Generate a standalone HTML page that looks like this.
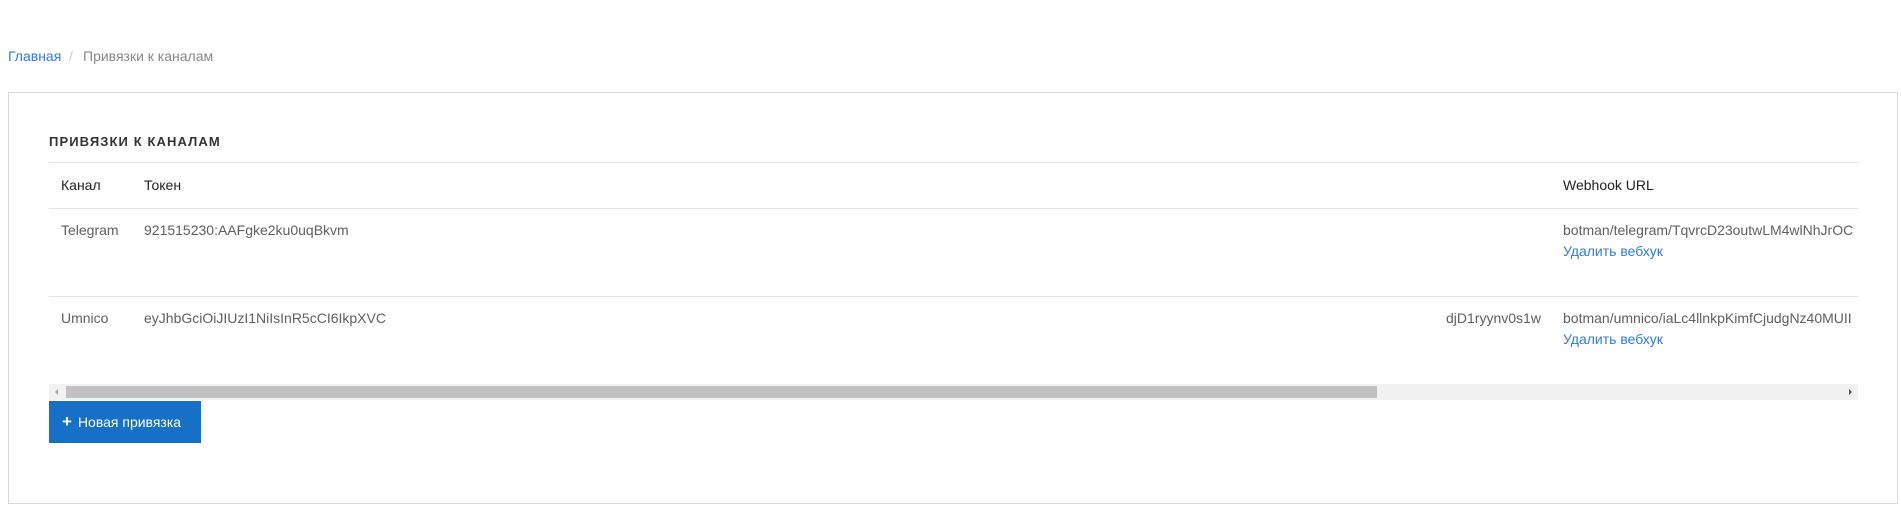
<!DOCTYPE html>
<html><head><meta charset="utf-8"><style>
*{box-sizing:border-box;margin:0;padding:0}
body{width:1901px;height:505px;background:#fff;font-family:"Liberation Sans",Arial,sans-serif;font-size:14px;color:#5f5f5f;position:relative;overflow:hidden}
.a{position:absolute;white-space:nowrap;line-height:18px}
.card{position:absolute;left:8px;top:92px;width:1890px;height:412px;border:1px solid #d5d8de}
.ln{position:absolute;left:49px;width:1809px;height:1px;background:#dfe2e6}
.h{color:#222}
.blue{color:#2f7be0}
</style></head><body>
<div class="a blue" style="left:8px;top:47px">Главная</div>
<div class="a" style="left:69px;top:47px;color:#ccc">/</div>
<div class="a" style="left:83px;top:47px;color:#888">Привязки к каналам</div>
<div class="card"></div>
<div class="a" style="left:49px;top:133px;font-weight:bold;color:#333;letter-spacing:1.1px;font-size:13px">ПРИВЯЗКИ К КАНАЛАМ</div>
<div class="ln" style="top:162px"></div>
<div class="a h" style="left:61px;top:176px">Канал</div>
<div class="a h" style="left:144px;top:176px">Токен</div>
<div class="a h" style="left:1563px;top:176px">Webhook URL</div>
<div class="ln" style="top:208px"></div>
<div class="a" style="left:61px;top:221px">Telegram</div>
<div class="a" style="left:144px;top:221px">921515230:AAFgke2ku0uqBkvm</div>
<div class="a" style="left:1563px;top:221px;width:295px;overflow:hidden">botman/telegram/TqvrcD23outwLM4wlNhJrOC</div>
<div class="a blue" style="left:1563px;top:242px">Удалить вебхук</div>
<div class="ln" style="top:296px"></div>
<div class="a" style="left:61px;top:309px">Umnico</div>
<div class="a" style="left:144px;top:309px">eyJhbGciOiJIUzI1NiIsInR5cCI6IkpXVC</div>
<div class="a" style="left:1446px;top:309px">djD1ryynv0s1w</div>
<div class="a" style="left:1563px;top:309px;width:295px;overflow:hidden">botman/umnico/iaLc4llnkpKimfCjudgNz40MUII</div>
<div class="a blue" style="left:1563px;top:330px">Удалить вебхук</div>
<div style="position:absolute;left:49px;top:384px;width:1809px;height:16px;background:#f1f1f1"></div>
<div style="position:absolute;left:66px;top:386px;width:1311px;height:12px;background:#c1c1c1"></div>
<div style="position:absolute;left:55px;top:389px;width:0;height:0;border-top:3px solid transparent;border-bottom:3px solid transparent;border-right:3px solid #a3a3a3"></div>
<div style="position:absolute;left:1849px;top:389px;width:0;height:0;border-top:3px solid transparent;border-bottom:3px solid transparent;border-left:3px solid #505050"></div>
<div style="position:absolute;left:49px;top:401px;width:152px;height:42px;background:#1670c6;color:#fff;line-height:42px;padding-left:13px">
<span style="font-weight:bold;font-size:17px;margin-right:6px">+</span>Новая привязка</div>
</body></html>
